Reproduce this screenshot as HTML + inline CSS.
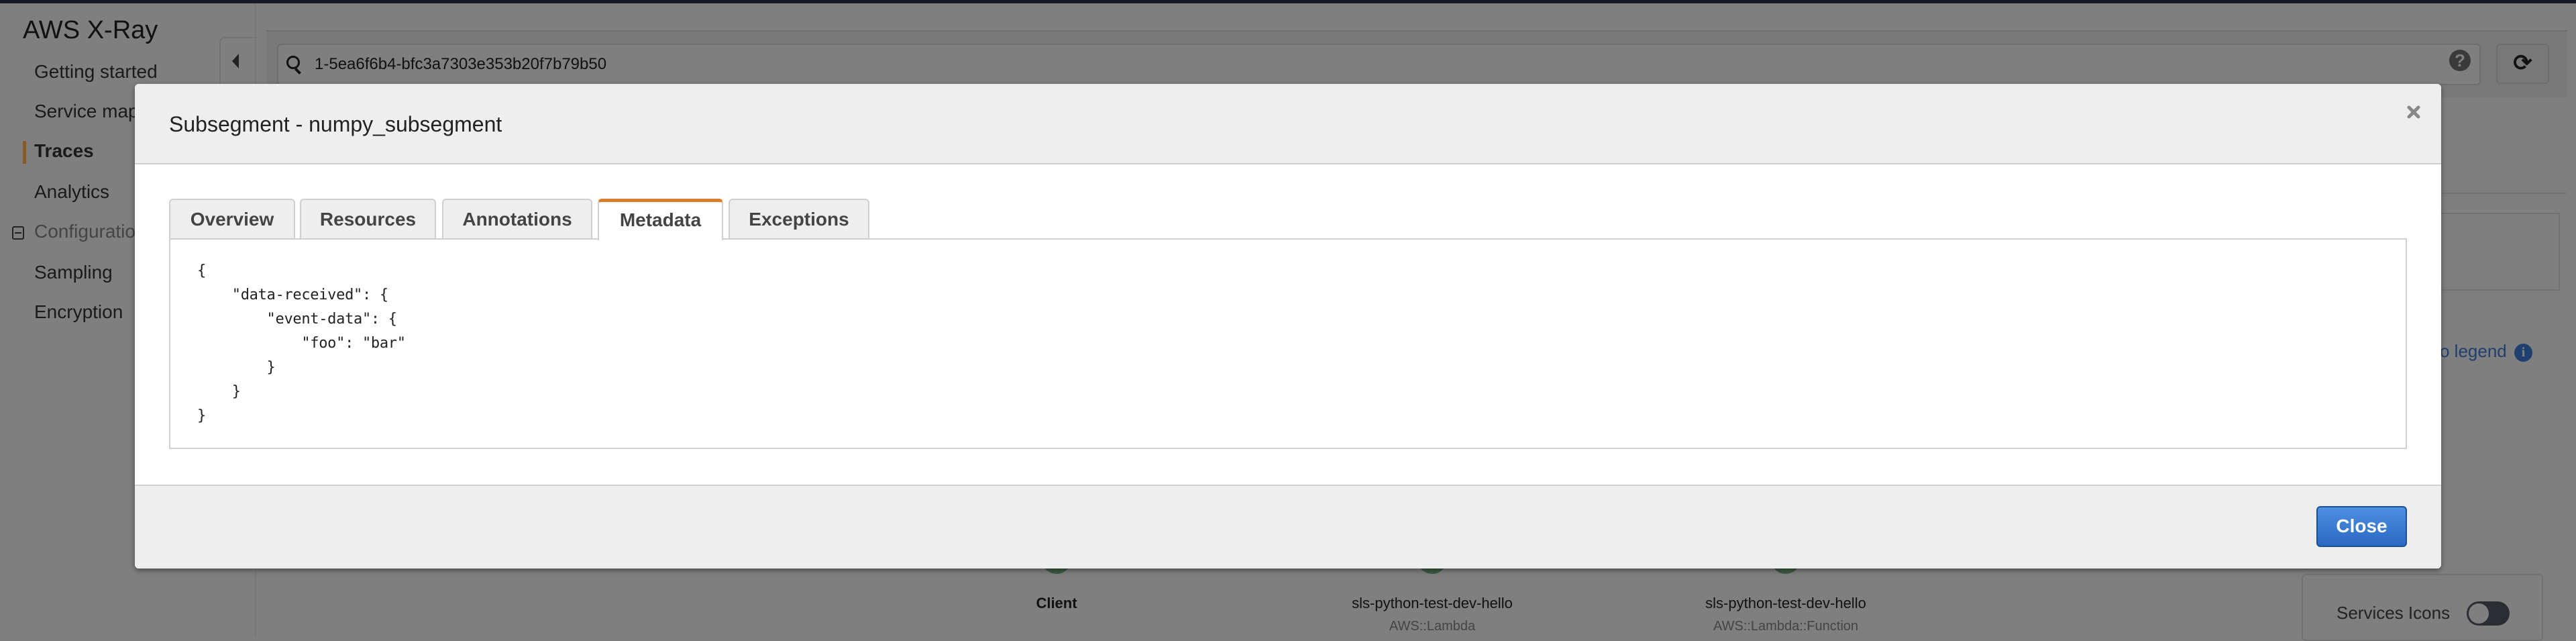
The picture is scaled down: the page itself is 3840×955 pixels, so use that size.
<!DOCTYPE html>
<html><head><meta charset="utf-8"><style>
*{margin:0;padding:0;box-sizing:border-box}
body{width:3840px;height:948px;overflow:hidden;background:#7f7f7f;font-family:"Liberation Sans",sans-serif;position:relative}
.a{position:absolute}
.nav{position:absolute;left:51px;font-size:28px;color:#1a1a1a}
.tab{position:absolute;top:296px;height:60px;background:#eeeeee;border:2px solid #cfcfcf;border-bottom:none;border-radius:6px 6px 0 0;font-weight:bold;font-size:28px;color:#444;text-align:center;line-height:58px}
.code{position:absolute;left:294px;font-family:"DejaVu Sans Mono","Liberation Mono",monospace;font-size:22px;color:#222;white-space:pre;letter-spacing:-0.3px}
.lbl{position:absolute;font-size:22px;color:#111;transform:translateX(-50%);white-space:nowrap}
.sub{position:absolute;font-size:20px;color:#444;transform:translateX(-50%);white-space:nowrap}
</style></head><body>
<div class="a" style="left:0;top:0;width:3840px;height:5px;background:#141a26"></div>
<div class="a" style="left:380px;top:5px;width:2px;height:943px;background:#777"></div>
<div class="a" style="left:34px;top:24px;font-size:38px;color:#111">AWS X-Ray</div>
<div class="nav" style="top:91px">Getting started</div>
<div class="nav" style="top:150px">Service map</div>
<div class="a" style="left:34px;top:210px;width:5px;height:34px;background:#8a5a22"></div>
<div class="nav" style="top:209px;font-weight:bold">Traces</div>
<div class="nav" style="top:270px">Analytics</div>
<div class="a" style="left:18px;top:337px;width:18px;height:20px;border:2px solid #222;border-radius:3px"></div>
<div class="a" style="left:22px;top:346px;width:10px;height:2px;background:#222"></div>
<div class="nav" style="top:329px;color:#444">Configuration</div>
<div class="nav" style="top:390px">Sampling</div>
<div class="nav" style="top:449px">Encryption</div>
<div class="a" style="left:327px;top:55px;width:56px;height:200px;border:2px solid #747474;border-right:none;border-radius:8px 0 0 0"></div>
<div class="a" style="left:346px;top:80px;width:0;height:0;border-top:11px solid transparent;border-bottom:11px solid transparent;border-right:10px solid #222"></div>
<div class="a" style="left:397px;top:45px;width:3430px;height:100px;background:#797979;border-top:2px solid #6e6e6e"></div>
<div class="a" style="left:413px;top:65px;width:3285px;height:62px;background:#7f7f7f;border:2px solid #6e6e6e;border-radius:6px"></div>
<div class="a" style="left:427px;top:83px;width:20px;height:20px;border:3px solid #111;border-radius:50%"></div>
<div class="a" style="left:442px;top:101px;width:4px;height:10px;background:#111;transform:rotate(-45deg)"></div>
<div class="a" style="left:469px;top:82px;font-size:24px;color:#111">1-5ea6f6b4-bfc3a7303e353b20f7b79b50</div>
<div class="a" style="left:3651px;top:74px;width:32px;height:32px;border-radius:50%;background:#3a3a3a;color:#7f7f7f;font-weight:bold;font-size:26px;text-align:center;line-height:32px">?</div>
<div class="a" style="left:3721px;top:65px;width:79px;height:60px;border:2px solid #6e6e6e;border-radius:6px;font-size:34px;text-align:center;line-height:54px;color:#111;font-weight:bold">⟳</div>
<div class="a" style="left:3640px;top:287px;width:186px;height:2px;background:#727272"></div>
<div class="a" style="left:3600px;top:317px;width:216px;height:116px;border:2px solid #727272"></div>
<div class="a" style="left:3637px;top:508px;font-size:26px;color:#1e3f70">o legend</div>
<div class="a" style="left:3748px;top:512px;width:27px;height:27px;border-radius:50%;background:#1e3f70;color:#7f7f7f;font-weight:bold;font-size:20px;text-align:center;line-height:27px;font-family:'Liberation Serif',serif">i</div>
<div class="a" style="left:3431px;top:855px;width:360px;height:100px;border:2px solid #727272;border-radius:6px"></div>
<div class="a" style="left:3483px;top:898px;font-size:26px;color:#222">Services Icons</div>
<div class="a" style="left:3677px;top:896px;width:64px;height:36px;border-radius:18px;background:#2a2d33"></div>
<div class="a" style="left:3680px;top:899px;width:30px;height:30px;border-radius:50%;background:#7f7f7f"></div>
<div class="a" style="left:1550px;top:798px;width:50px;height:57px;border-radius:50%;background:#3d5c40"></div>
<div class="a" style="left:2110px;top:798px;width:50px;height:57px;border-radius:50%;background:#3d5c40"></div>
<div class="a" style="left:2637px;top:798px;width:50px;height:57px;border-radius:50%;background:#3d5c40"></div>
<div class="lbl" style="left:1575px;top:886px;font-weight:bold">Client</div>
<div class="lbl" style="left:2135px;top:886px">sls-python-test-dev-hello</div>
<div class="lbl" style="left:2662px;top:886px">sls-python-test-dev-hello</div>
<div class="sub" style="left:2135px;top:922px">AWS::Lambda</div>
<div class="sub" style="left:2662px;top:922px">AWS::Lambda::Function</div>

<div class="a" style="left:201px;top:125px;width:3438px;height:722px;background:#fff;border-radius:6px;box-shadow:0 3px 8px rgba(0,0,0,.4);overflow:hidden">
 <div class="a" style="left:0;top:0;width:100%;height:120px;background:#eeeeee;border-bottom:2px solid #cfcfcf"></div>
 <div class="a" style="left:51px;top:42px;font-size:32px;color:#222">Subsegment - numpy_subsegment</div>
 <svg class="a" style="left:3387px;top:32px" width="20" height="20" viewBox="0 0 20 20"><path d="M3 3L17 17M17 3L3 17" stroke="#888" stroke-width="5" stroke-linecap="round"/></svg>
 <div class="a" style="left:0;top:597px;width:100%;height:125px;background:#eeeeee;border-top:2px solid #cfcfcf"></div>
 <div class="a" style="left:3252px;top:629px;width:135px;height:61px;border-radius:6px;border:2px solid #1d4f96;background:linear-gradient(#4f90e2,#2a68c2);color:#fff;font-weight:bold;font-size:28px;text-align:center;line-height:56px">Close</div>
</div>
<div class="tab" style="left:252px;width:188px">Overview</div>
<div class="tab" style="left:447px;width:203px">Resources</div>
<div class="tab" style="left:659px;width:224px">Annotations</div>
<div class="tab" style="left:891px;width:187px;background:#fff;border-top:5px solid #dd7d2b;height:62px;z-index:2;line-height:54px">Metadata</div>
<div class="tab" style="left:1086px;width:210px">Exceptions</div>
<div class="a" style="left:252px;top:355px;width:3336px;height:314px;border:2px solid #cfcfcf;background:#fff"></div>
<div class="code" style="top:391px">{</div>
<div class="code" style="top:427px">    "data-received": {</div>
<div class="code" style="top:463px">        "event-data": {</div>
<div class="code" style="top:499px">            "foo": "bar"</div>
<div class="code" style="top:535px">        }</div>
<div class="code" style="top:571px">    }</div>
<div class="code" style="top:607px">}</div>
</body></html>
